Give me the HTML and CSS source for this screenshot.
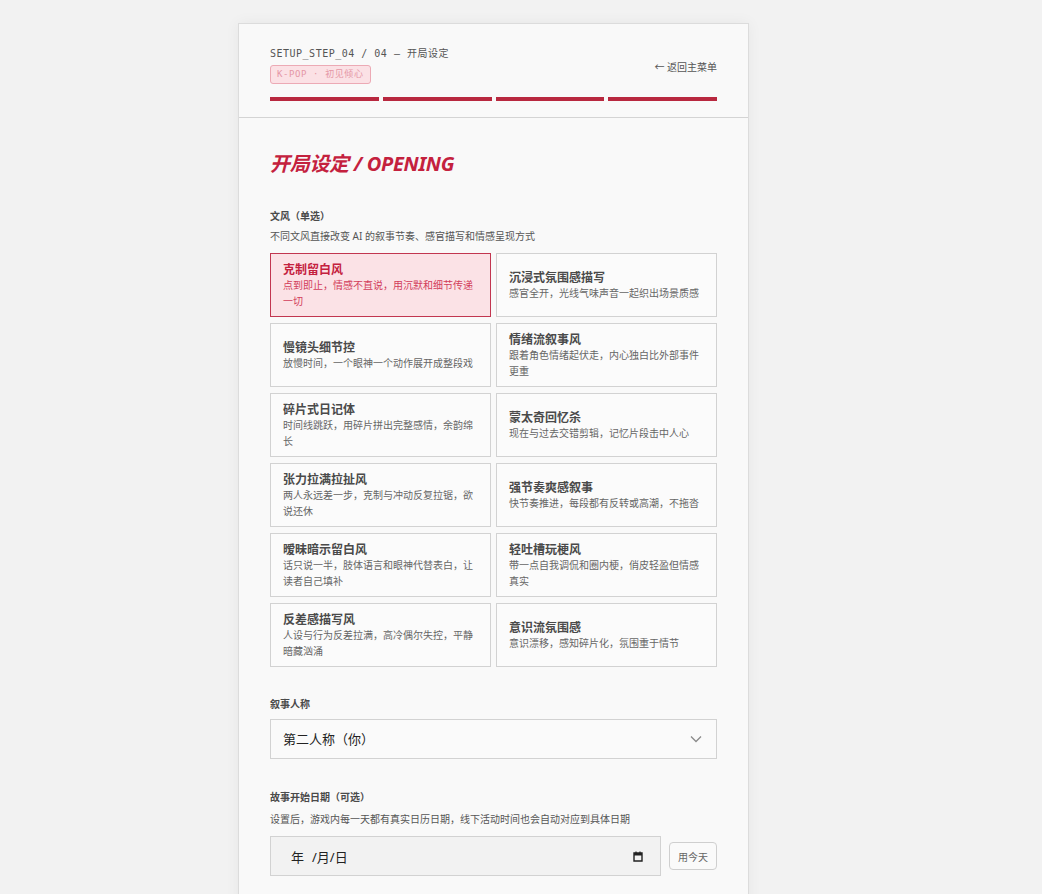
FILE: index.html
```html
<!DOCTYPE html>
<html lang="zh-CN">
<head>
    <meta charset="UTF-8">
    <meta name="viewport" content="width=device-width, initial-scale=1.0">
    <title>开局设定</title>
    <link rel="stylesheet" href="styles.css">
</head>
<body>
    <div class="setup">
        <div class="setup-header">
            <div class="header-row">
                <div class="header-meta">
                    <div class="step">SETUP_STEP_04 / 04 — 开局设定</div>
                    <span class="chip">K-POP · 初见倾心</span>
                </div>
                <a class="back" href="#">← 返回主菜单</a>
            </div>
            <div class="progress">
                <span class="done"></span>
                <span class="done"></span>
                <span class="done"></span>
                <span class="done"></span>
            </div>
        </div>

        <div class="setup-body">
            <h1 class="title">开局设定 / OPENING</h1>

            <div class="field">
                <div class="label">文风（单选）</div>
                <div class="hint">不同文风直接改变 AI 的叙事节奏、感官描写和情感呈现方式</div>
                <div class="styles">
                    <button class="style-card active">
                        <span class="style-name">克制留白风</span>
                        <span class="style-desc">点到即止，情感不直说，用沉默和细节传递一切</span>
                    </button>
                    <button class="style-card">
                        <span class="style-name">沉浸式氛围感描写</span>
                        <span class="style-desc">感官全开，光线气味声音一起织出场景质感</span>
                    </button>
                    <button class="style-card">
                        <span class="style-name">慢镜头细节控</span>
                        <span class="style-desc">放慢时间，一个眼神一个动作展开成整段戏</span>
                    </button>
                    <button class="style-card">
                        <span class="style-name">情绪流叙事风</span>
                        <span class="style-desc">跟着角色情绪起伏走，内心独白比外部事件更重</span>
                    </button>
                    <button class="style-card">
                        <span class="style-name">碎片式日记体</span>
                        <span class="style-desc">时间线跳跃，用碎片拼出完整感情，余韵绵长</span>
                    </button>
                    <button class="style-card">
                        <span class="style-name">蒙太奇回忆杀</span>
                        <span class="style-desc">现在与过去交错剪辑，记忆片段击中人心</span>
                    </button>
                    <button class="style-card">
                        <span class="style-name">张力拉满拉扯风</span>
                        <span class="style-desc">两人永远差一步，克制与冲动反复拉锯，欲说还休</span>
                    </button>
                    <button class="style-card">
                        <span class="style-name">强节奏爽感叙事</span>
                        <span class="style-desc">快节奏推进，每段都有反转或高潮，不拖沓</span>
                    </button>
                    <button class="style-card">
                        <span class="style-name">暧昧暗示留白风</span>
                        <span class="style-desc">话只说一半，肢体语言和眼神代替表白，让读者自己填补</span>
                    </button>
                    <button class="style-card">
                        <span class="style-name">轻吐槽玩梗风</span>
                        <span class="style-desc">带一点自我调侃和圈内梗，俏皮轻盈但情感真实</span>
                    </button>
                    <button class="style-card">
                        <span class="style-name">反差感描写风</span>
                        <span class="style-desc">人设与行为反差拉满，高冷偶尔失控，平静暗藏汹涌</span>
                    </button>
                    <button class="style-card">
                        <span class="style-name">意识流氛围感</span>
                        <span class="style-desc">意识漂移，感知碎片化，氛围重于情节</span>
                    </button>
                </div>
            </div>

            <div class="field">
                <div class="label">叙事人称</div>
                <div class="select-wrap">
                    <select class="select">
                        <option>第二人称（你）</option>
                        <option>第一人称（我）</option>
                        <option>第三人称（她/他）</option>
                    </select>
                    <svg class="chevron" width="12" height="8" viewBox="0 0 12 8">
                        <path d="M1 1.5l5 5 5-5" fill="none" stroke="#8a8a8a" stroke-width="1.3"/>
                    </svg>
                </div>
            </div>

            <div class="field date-field">
                <div class="label">故事开始日期（可选）</div>
                <div class="hint">设置后，游戏内每一天都有真实日历日期，线下活动时间也会自动对应到具体日期</div>
                <div class="date-row">
                    <div class="date-input">
                        <span class="date-text"><span class="date-year">年</span>/月/日</span>
                        <svg width="10" height="11" viewBox="0 0 10 11">
                            <path d="M1 2h8v8H1z" fill="none" stroke="#222" stroke-width="1.4"/>
                            <path d="M1 2h8v2.5H1z" fill="#222"/>
                            <path d="M3 0.5v2M7 0.5v2" stroke="#222" stroke-width="1.2"/>
                        </svg>
                    </div>
                    <button class="today">用今天</button>
                </div>
            </div>
        </div>
    </div>
</body>
</html>
```

FILE: styles.css
```css
:root {
    --accent: #b8283f;
    --accent-text: #c4213e;
    --page-bg: #f2f2f2;
    --panel-bg: #f9f9f9;
    --line: #d2d2d2;
    --text: #4a4a4a;
    --muted: #666;
    --mono: 'DejaVu Sans Mono', 'Liberation Mono', 'Noto Sans CJK SC', monospace;
    --sans: 'Noto Sans', 'Noto Sans CJK SC', sans-serif;
}

* {
    margin: 0;
    padding: 0;
    box-sizing: border-box;
}

html {
    overflow: hidden;
}

body {
    background-color: var(--page-bg);
    font-family: var(--sans);
    color: var(--text);
}

.setup {
    width: 511px;
    margin: 23px 0 0 238px;
    background-color: var(--panel-bg);
    border: 1px solid #dcdcdc;
    box-shadow: 0 0 14px rgba(0, 0, 0, 0.05);
}

/* header: step info, back link, progress */
.setup-header {
    padding: 22px 31px 16px;
    border-bottom: 1px solid #d4d4d4;
}

.header-row {
    display: flex;
    justify-content: space-between;
    align-items: center;
}

.header-meta {
    display: flex;
    flex-direction: column;
    align-items: flex-start;
    gap: 3px;
}

.step {
    font-family: var(--mono);
    font-size: 10px;
    line-height: 16px;
    letter-spacing: 0.5px;
    color: #555;
}

.chip {
    font-family: var(--mono);
    font-size: 9px;
    line-height: 17px;
    letter-spacing: 0.6px;
    color: #e597a5;
    background-color: #fbe1e5;
    border: 1px solid #ecaab5;
    border-radius: 3px;
    padding: 0 6px;
}

.back {
    font-size: 10px;
    color: #555;
    text-decoration: none;
    margin-top: 2px;
}

.progress {
    display: grid;
    grid-template-columns: repeat(4, 1fr);
    gap: 4px;
    margin-top: 13px;
}

.progress span {
    height: 4px;
    background-color: #e6d2d6;
}

.progress .done {
    background-color: var(--accent);
}

/* body */
.setup-body {
    padding: 32px 31px 40px;
}

.title {
    font-size: 20px;
    line-height: 28px;
    font-weight: 700;
    font-style: italic;
    letter-spacing: -0.3px;
    color: var(--accent-text);
    margin-bottom: 30px;
}

.field + .field {
    margin-top: 29px;
}

.field + .date-field {
    margin-top: 30px;
}

.label {
    font-size: 10px;
    line-height: 16px;
    font-weight: 700;
    color: var(--text);
}

.hint {
    font-size: 10px;
    line-height: 16px;
    color: #555;
    margin-top: 4px;
}

.date-field .hint {
    margin-top: 6px;
}

.styles {
    display: grid;
    grid-template-columns: 1fr 1fr;
    gap: 6px 5px;
    margin-top: 9px;
}

.style-card {
    display: flex;
    flex-direction: column;
    justify-content: center;
    align-items: flex-start;
    min-height: 64px;
    padding: 7px 12px;
    text-align: left;
    font-family: var(--sans);
    background-color: #fbfbfb;
    border: 1px solid var(--line);
    cursor: pointer;
}

.style-name {
    font-size: 12px;
    line-height: 17px;
    font-weight: 700;
    color: var(--text);
}

.style-desc {
    font-size: 10px;
    line-height: 15.5px;
    color: var(--muted);
}

.style-card.active {
    background-color: #fbe2e6;
    border-color: #c23650;
}

.style-card.active .style-name {
    color: var(--accent-text);
}

.style-card.active .style-desc {
    color: #d23c5a;
}

/* select */
.select-wrap {
    position: relative;
    margin-top: 7px;
}

.select {
    appearance: none;
    width: 100%;
    height: 40px;
    padding: 0 12px;
    font-family: var(--sans);
    font-size: 13px;
    color: #222;
    background-color: #fafafa;
    border: 1px solid var(--line);
    border-radius: 0;
}

.chevron {
    position: absolute;
    right: 15px;
    top: 16px;
    pointer-events: none;
}

/* date */
.date-row {
    display: flex;
    align-items: center;
    gap: 8px;
    margin-top: 9px;
}

.date-input {
    flex: 1;
    height: 40px;
    display: flex;
    align-items: center;
    justify-content: space-between;
    padding: 0 17px 0 20px;
    background-color: #f2f2f2;
    border: 1px solid var(--line);
}

.date-text {
    font-size: 13px;
    color: #222;
}

.date-year {
    margin-right: 8px;
}

.today {
    height: 28px;
    padding: 0 8px;
    font-family: var(--sans);
    font-size: 10px;
    color: #666;
    background-color: #fafafa;
    border: 1px solid #cfcfcf;
    border-radius: 4px;
    cursor: pointer;
}
```
